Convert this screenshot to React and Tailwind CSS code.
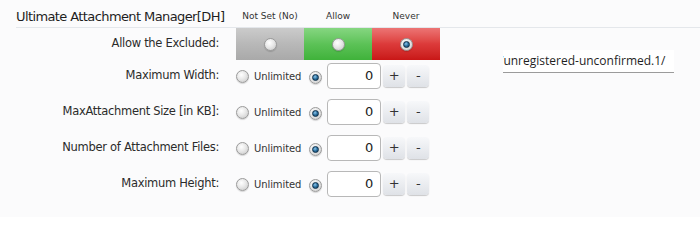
import React from "react";

function Radio({ checked }) {
  return (
    <span className="relative inline-flex h-[13px] w-[13px] shrink-0 items-center justify-center rounded-full border border-[#9a9a9a] bg-[radial-gradient(circle_at_40%_35%,#ffffff_0%,#e8e8e8_45%,#c4c4c4_100%)] shadow-[0_1px_1px_rgba(0,0,0,0.15)]">
      {checked && (
        <span className="h-[7px] w-[7px] rounded-full border border-[#0d2f4a] bg-[radial-gradient(circle_at_40%_35%,#8ec6ec_0%,#2a6f9e_50%,#103a5c_100%)]" />
      )}
    </span>
  );
}

function NumberRow({ label }) {
  return (
    <div className="flex h-[32px] items-center">
      <div className="w-[220px] pr-[1px] text-right text-[11.5px] tracking-[-0.3px] text-[#2b2b2b]">{label}</div>
      <div className="ml-[16px] flex items-center">
        <Radio />
        <span className="ml-[5px] text-[10px] tracking-[-0.1px] text-[#333]">Unlimited</span>
        <span className="ml-[8px]">
          <Radio checked />
        </span>
        <div className="ml-[5px] flex h-[26px] w-[54px] items-center justify-end rounded-[4px] border border-[#b8b8b8] bg-white pr-[7px] text-[13px] text-[#222]">
          0
        </div>
        <button className="ml-[2px] flex h-[22px] w-[22px] items-center justify-center rounded-[4px] bg-linear-to-b from-[#f7f8fa] to-[#dfe2e7] text-[13px] text-[#333] shadow-[0_1px_1px_rgba(0,0,0,0.2)]">
          +
        </button>
        <button className="ml-[2px] flex h-[22px] w-[22px] items-center justify-center rounded-[4px] bg-linear-to-b from-[#f7f8fa] to-[#dfe2e7] text-[13px] text-[#333] shadow-[0_1px_1px_rgba(0,0,0,0.2)]">
          -
        </button>
      </div>
    </div>
  );
}

export default function App() {
  return (
    <div className="h-[217px] w-[700px] overflow-hidden bg-[#fbfbfc] font-['DejaVu_Sans',sans-serif]">
      {/* header */}
      <div className="ml-[16px] flex h-[28px] items-end border-b border-[#e4e7eb] pb-[1px]">
        <div className="w-[220px] text-[13px] tracking-[-0.6px] text-[#1e1e1e]">
          Ultimate Attachment Manager[DH]
        </div>
        <div className="flex pb-[3px] text-[9px] text-[#333]">
          <span className="w-[68px] text-center">Not Set (No)</span>
          <span className="w-[68px] text-center">Allow</span>
          <span className="w-[68px] text-center">Never</span>
        </div>
      </div>

      <div className="flex">
        <div className="flex flex-col">
          <div className="flex h-[32px] items-center">
            <div className="w-[220px] pr-[1px] text-right text-[11.5px] tracking-[-0.3px] text-[#2b2b2b]">
              Allow the Excluded:
            </div>
            <div className="ml-[16px] flex h-full">
              <div className="flex w-[68px] items-center justify-center bg-linear-to-b from-[#cbcbcb] via-[#b8b8b8] to-[#a9a9a9]">
                <Radio />
              </div>
              <div className="flex w-[68px] items-center justify-center bg-linear-to-b from-[#86d681] via-[#5cc257] to-[#3fb23a]">
                <Radio />
              </div>
              <div className="flex w-[68px] items-center justify-center bg-linear-to-b from-[#ec7474] via-[#dc3a3a] to-[#c91616]">
                <Radio checked />
              </div>
            </div>
          </div>
          <div className="flex flex-col gap-[4px]">
            <NumberRow label="Maximum Width:" />
            <NumberRow label="MaxAttachment Size [in KB]:" />
            <NumberRow label="Number of Attachment Files:" />
            <NumberRow label="Maximum Height:" />
          </div>
        </div>

        <div className="ml-[63px] mt-[22px]">
          <div className="flex h-[23px] w-[171px] items-center overflow-hidden border-b border-[#9b9b9b] bg-white font-['Open_Sans',sans-serif] text-[12px] text-[#1f1f1f]">
            <span className="-ml-[4px] whitespace-nowrap">/unregistered-unconfirmed.1/</span>
          </div>
        </div>
      </div>
    </div>
  );
}
